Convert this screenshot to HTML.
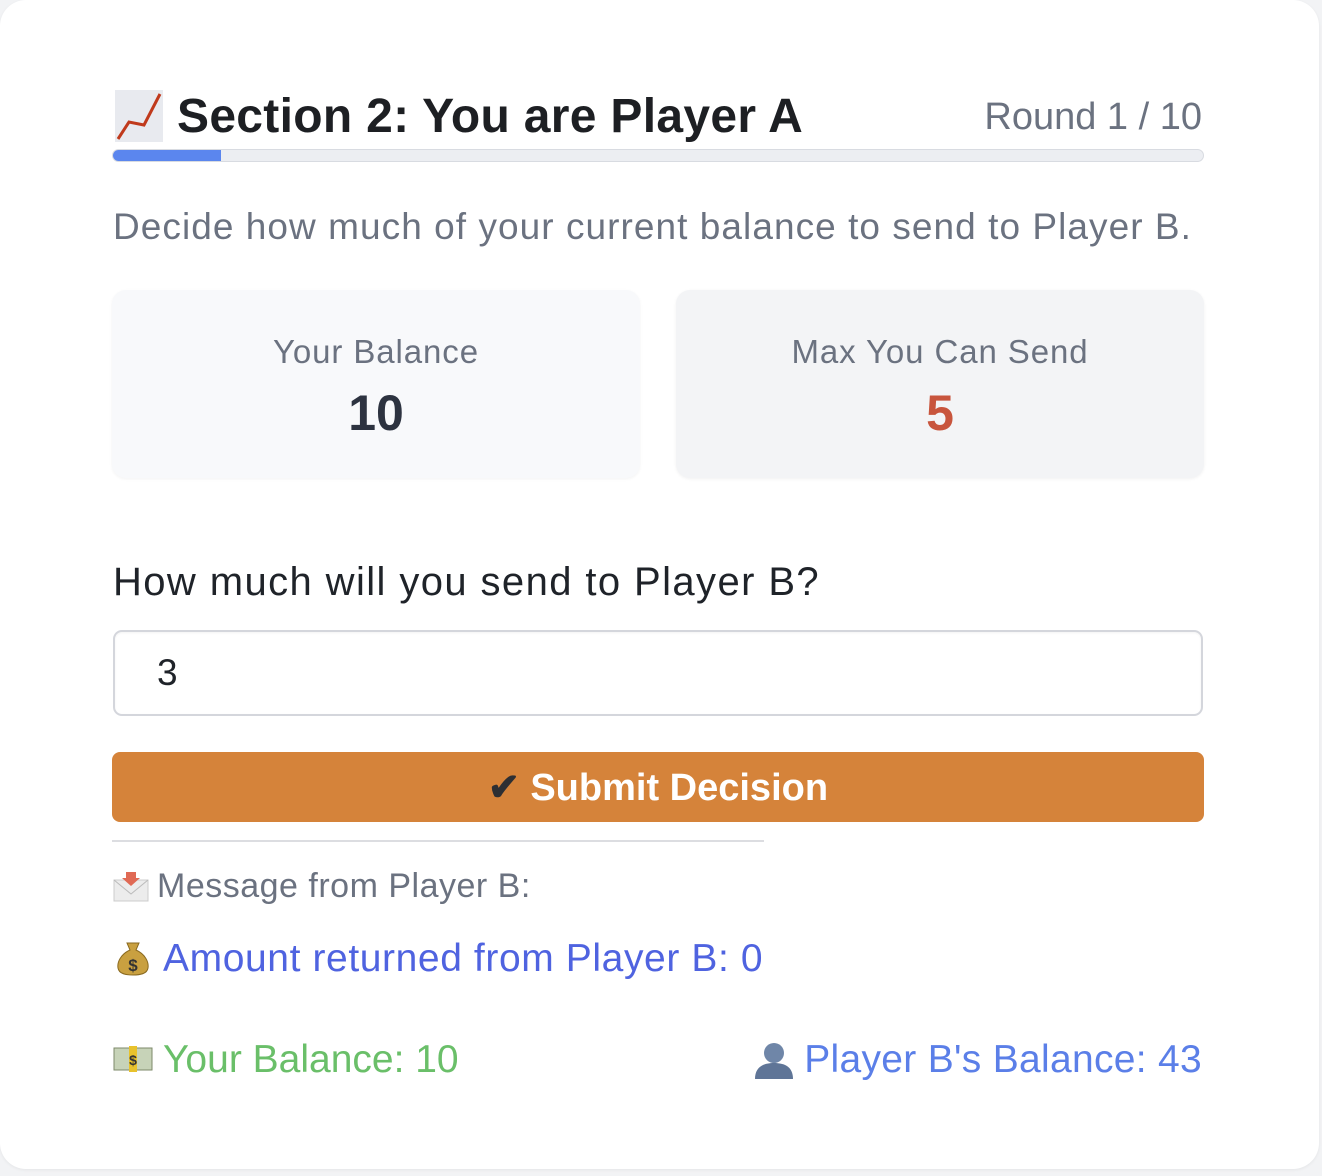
<!DOCTYPE html>
<html><head><style>
*{margin:0;padding:0;box-sizing:border-box}
body{width:1322px;height:1176px;background:#f2f3f5;font-family:"Liberation Sans",sans-serif;position:relative;overflow:hidden}
.card{position:absolute;left:0;top:0;width:1319px;height:1169px;background:#fff;border-radius:26px;box-shadow:0 1px 3px rgba(0,0,0,.06)}
.a{position:absolute;white-space:nowrap}
</style></head><body>
<div class="card"></div>
<svg class="a" style="left:115px;top:90px" width="48" height="52" viewBox="0 0 48 52"><rect width="48" height="52" fill="#e8eaef"/><path d="M3 49 L14 32 L29 35 L45 4" fill="none" stroke="#c03a1c" stroke-width="3"/></svg>
<div class="a" style="left:177px;top:89px;font-size:48px;font-weight:bold;color:#1d1f23;letter-spacing:0.3px">Section 2: You are Player A</div>
<div class="a" style="right:120px;top:96px;font-size:38px;color:#6b7280">Round 1 / 10</div>
<div class="a" style="left:112px;top:149px;width:1092px;height:13px;background:#eceef2;border:1px solid #d8dbe1;border-radius:7px;overflow:hidden"><div style="width:108px;height:100%;background:#5b86ee"></div></div>
<div class="a" style="left:113px;top:206px;font-size:37px;color:#6b7280;letter-spacing:1.05px">Decide how much of your current balance to send to Player B.</div>
<div class="a" style="left:112px;top:290px;width:528px;height:188px;background:#f8f9fb;border-radius:14px;box-shadow:0 1px 3px rgba(0,0,0,.05)"></div>
<div class="a" style="left:676px;top:290px;width:528px;height:188px;background:#f3f4f6;border-radius:14px;box-shadow:0 1px 3px rgba(0,0,0,.06)"></div>
<div class="a" style="left:112px;width:528px;text-align:center;top:333px;font-size:33px;color:#6b7280;letter-spacing:0.9px">Your Balance</div>
<div class="a" style="left:112px;width:528px;text-align:center;top:384px;font-size:50px;font-weight:bold;color:#2d3340">10</div>
<div class="a" style="left:676px;width:528px;text-align:center;top:333px;font-size:33px;color:#6b7280;letter-spacing:0.9px">Max You Can Send</div>
<div class="a" style="left:676px;width:528px;text-align:center;top:384px;font-size:50px;font-weight:bold;color:#c8553d">5</div>
<div class="a" style="left:113px;top:560px;font-size:40px;color:#1f2329;letter-spacing:1.4px">How much will you send to Player B?</div>
<div class="a" style="left:113px;top:630px;width:1090px;height:86px;border:2px solid #d4d6dc;border-radius:9px;box-shadow:inset 0 1px 2px rgba(0,0,0,.05)"></div>
<div class="a" style="left:157px;top:652px;font-size:37px;color:#1f2329">3</div>
<div class="a" style="left:112px;top:752px;width:1092px;height:70px;background:#d5833a;border-radius:8px;text-align:center;line-height:72px;font-size:38px;font-weight:bold;color:#fff"><span style="color:#2d2f33">✔</span> Submit Decision</div>
<div class="a" style="left:112px;top:840px;width:652px;height:2px;background:#dcdde1"></div>
<svg class="a" style="left:113px;top:870px" width="36" height="32" viewBox="0 0 36 32"><rect x="1" y="10" width="34" height="21" fill="#ececec" stroke="#ccc"/><path d="M1 10 L18 24 L35 10" fill="none" stroke="#bbb"/><path d="M13 2 h10 v6 h4 l-9 8 -9 -8 h4z" fill="#e06a55"/></svg>
<div class="a" style="left:157px;top:867px;font-size:34px;color:#6b7280;letter-spacing:0.5px">Message from Player B:</div>
<svg class="a" style="left:116px;top:940px" width="34" height="36" viewBox="0 0 34 36"><path d="M11 3 h12 l-3 7 c9 4 13 12 12 18 -1 6 -8 7 -15 7 s-14 -1 -15 -7 c-1 -6 3 -14 12 -18z" fill="#c9a040" stroke="#8a6a20"/><text x="17" y="31" font-size="17" text-anchor="middle" font-family="Liberation Sans" font-weight="bold" fill="#333">$</text></svg>
<div class="a" style="left:163px;top:937px;font-size:39px;color:#4f63e0;letter-spacing:0.6px">Amount returned from Player B: 0</div>
<svg class="a" style="left:113px;top:1045px" width="40" height="28" viewBox="0 0 40 28"><rect x="1" y="3" width="38" height="22" fill="#c7d3b8" stroke="#7d8a6a"/><rect x="16" y="1" width="8" height="26" fill="#e8c22c"/><text x="20" y="20" font-size="14" text-anchor="middle" font-family="Liberation Sans" font-weight="bold" fill="#333">$</text></svg>
<div class="a" style="left:163px;top:1038px;font-size:39px;color:#6abf69">Your Balance: 10</div>
<svg class="a" style="left:753px;top:1040px" width="42" height="40" viewBox="0 0 42 40"><circle cx="21" cy="13" r="10" fill="#6f86a8"/><path d="M2 39 c0 -12 8 -16 19 -16 s19 4 19 16z" fill="#5f7597"/></svg>
<div class="a" style="right:120px;top:1038px;font-size:39px;color:#5b7fe8;letter-spacing:0.3px">Player B's Balance: 43</div>
</body></html>
